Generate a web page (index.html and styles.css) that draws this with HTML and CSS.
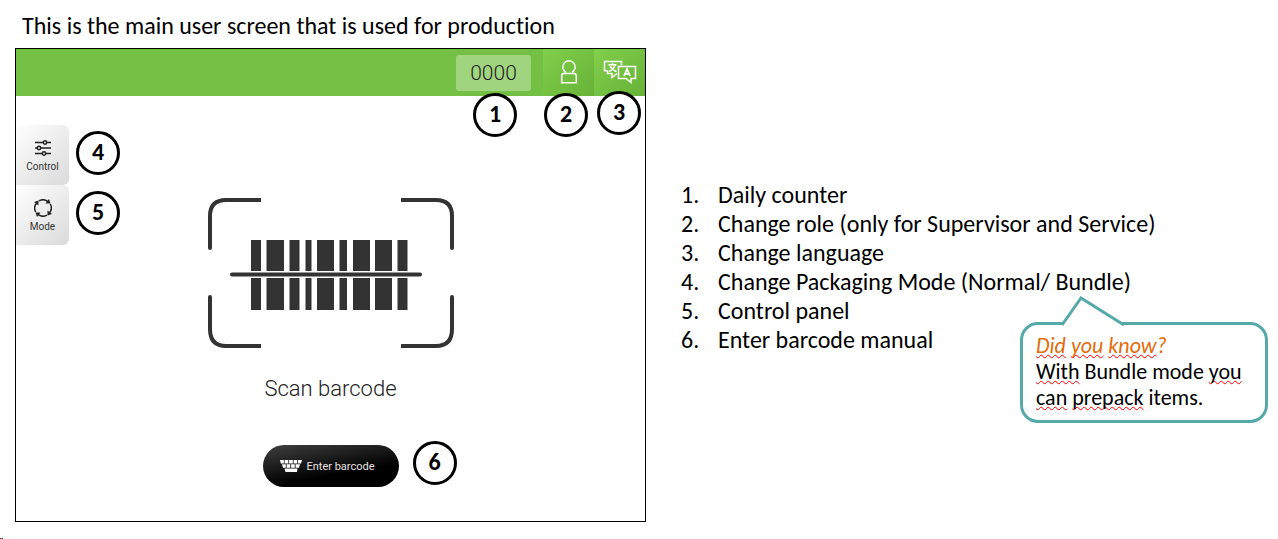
FILE: index.html
```html
<!DOCTYPE html>
<html lang="en">
<head>
<meta charset="utf-8">
<meta name="viewport" content="width=device-width, initial-scale=1">
<title>Main user screen</title>
<link rel="stylesheet" href="styles.css">
</head>
<body>
<main class="slide">
  <section class="demo">
    <h1 class="title">This is the main user screen that is used for production</h1>
    <div class="screen">
      <header class="topbar">
        <div class="anchor counter-wrap">
          <output class="counter">0000</output>
          <span class="mark mark-counter">1</span>
        </div>
        <div class="anchor">
          <button class="top-button" type="button" aria-label="Change role">
            <svg width="18" height="26" viewBox="0 0 18 26" fill="none" stroke="#fff" stroke-width="1.5">
              <path d="M6 13.5A6.2 6.2 0 1 1 12 13.5"/>
              <path d="M4 14.5H14Q16.3 14.5 16.3 17V23.8H1.7V17Q1.7 14.5 4 14.5Z"/>
            </svg>
          </button>
          <span class="mark mark-role">2</span>
        </div>
        <div class="anchor">
          <button class="top-button" type="button" aria-label="Change language">
            <svg width="34" height="26" viewBox="0 0 34 26" fill="none" stroke="#fff" stroke-width="1.5">
              <path d="M14 14.5L9 18.500V14.5H4.500V12L1.500 11.500V2.500H18.500V6.500"/>
              <path d="M5.500 5.800H13.500M9.500 4V6M12 6Q10.500 10.500 6 12.500M7 7Q9 11 13.500 12.500"/>
              <path d="M15.500 7.500H32.500V19.500H28V23.500L23 19.500H15.500Z"/>
              <path d="M21 17L24 10L27 17M22 14.800H26" stroke-width="1.800"/>
            </svg>
          </button>
          <span class="mark mark-language">3</span>
        </div>
      </header>
      <div class="workspace">
        <nav class="tabs">
          <div class="anchor">
            <button class="tab" type="button">
              <svg width="18" height="18" viewBox="0 0 18 18" fill="none" stroke="#222" stroke-width="1.5">
                <path d="M1 3.500H9M13 3.500H17M1 9H3M7 9H17M1 14.500H8M12 14.500H17"/>
                <circle cx="11" cy="3.500" r="1.700"/><circle cx="5" cy="9" r="1.700"/><circle cx="10" cy="14.500" r="1.700"/>
              </svg>
              <span>Control</span>
            </button>
            <span class="mark mark-tab">4</span>
          </div>
          <div class="anchor">
            <button class="tab" type="button">
              <svg width="18" height="18" viewBox="0 0 18 18" fill="none" stroke="#222" stroke-width="1.5">
                <path d="M5 1.900A8 8 0 0 1 14 2.600M16.300 5A8 8 0 0 1 15.800 13.500M13 16.100A8 8 0 0 1 4 15.400M1.700 13A8 8 0 0 1 2.200 4.500"/>
                <path d="M11.500 4.500H16.500L15 0ZM13.500 11.500V16.500L18 15ZM6.500 13.500H1.500L3 18ZM4.500 6.500V1.500L0 3Z" fill="#222" stroke="none"/>
              </svg>
              <span>Mode</span>
            </button>
            <span class="mark mark-tab">5</span>
          </div>
        </nav>
        <div class="scan">
          <svg class="barcode" width="246" height="150" viewBox="0 0 246 150" fill="none" stroke="#333" stroke-width="4">
            <path d="M53 2H18Q2 2 2 18V50M193 2H228Q244 2 244 18V50M2 99V131Q2 148 18 148H53M244 99V131Q244 148 228 148H193"/>
            <path d="M2 50v.1M244 50v.1M2 99v.1M244 99v.1" stroke-linecap="round"/>
            <g fill="#333" stroke="none">
              <path d="M43 42h10v70h-10zM58.500 42h17.500v70h-17.500zM81.500 42h10v70h-10zM97.500 42h6v70h-6zM109 42h17v70h-17zM131.500 42h7.500v70h-7.500zM145 42h17v70h-17zM167 42h17v70h-17zM189.500 42h10v70h-10z"/>
              <path d="M40 73h162v7h-162z" fill="#fff"/>
            </g>
            <path d="M24 76.500H212" stroke-linecap="round"/>
          </svg>
          <p class="scan-label">Scan barcode</p>
          <div class="anchor">
            <button class="enter" type="button">
              <svg width="22" height="12" viewBox="0 0 22 12" fill="#fff">
                <path d="M0 0h3.800v3.500h-3zM4.600 0h3.700v3.500H4.600zM9.100 0h3.700v3.500H9.100zM13.600 0h3.700v3.500h-3.700zM18.100 0H22l-1 3.500h-2.900zM2 4.300h3.800v3.500H3zM6.600 4.300h3.700v3.500H6.600zM11.100 4.300h3.700v3.500h-3.700zM15.600 4.300H20l-1 3.500h-3.400zM4.500 8.600h13L17 12H5.500z"/>
              </svg>
              <span>Enter barcode</span>
            </button>
            <span class="mark mark-enter">6</span>
          </div>
        </div>
      </div>
    </div>
  </section>
  <section class="notes">
    <ol class="legend">
      <li>Daily counter</li>
      <li>Change role (only for Supervisor and Service)</li>
      <li>Change language</li>
      <li>Change Packaging Mode (Normal/ Bundle)</li>
      <li>Control panel</li>
      <li>Enter barcode manual</li>
    </ol>
    <aside class="callout">
      <svg class="tail" width="66" height="30" viewBox="0 0 66 30">
        <path d="M2 29L21 2L64 29" fill="#fff" stroke="#56a9a9" stroke-width="3"/>
      </svg>
      <p class="callout-title"><span class="typo">Did</span> <span class="typo">you</span> <span class="typo">know</span>?</p>
      <p><span class="typo">With</span> Bundle mode <span class="typo">you</span><br><span class="typo">can</span> <span class="typo">prepack</span> items.</p>
    </aside>
  </section>
</main>
</body>
</html>
```
FILE: styles.css
```css
* { box-sizing: border-box; }

body {
  margin: 0;
  min-height: 100vh;
  background: linear-gradient(90deg, #f00 1px, #0c6 1px 2px, #00f 2px) left bottom / 3px 1px no-repeat #fff;
  color: #000;
  font-family: Carlito, Calibri, Lato, sans-serif;
  font-variant-ligatures: none;
}

p, h1 { margin: 0; }
button { border: 0; margin: 0; padding: 0; cursor: pointer; }
svg { display: block; flex: none; }

.slide {
  display: grid;
  grid-template-columns: minmax(0, 1fr) minmax(0, 1fr);
  padding: 12px 1px 17px 15px;
}

.title {
  padding-left: 7px;
  font-size: 24px;
  line-height: 28px;
  font-weight: 400;
  white-space: nowrap;
}

.screen {
  margin-top: 8px;
  border: 1px solid #000;
  font-family: Roboto, sans-serif;
}

.anchor { position: relative; }

.topbar {
  display: flex;
  justify-content: flex-end;
  height: 47px;
  background: #74c044;
}

.counter-wrap {
  display: flex;
  align-items: center;
  margin-right: 12px;
}

.counter {
  width: 75px;
  border-radius: 3px;
  background: #a0d47f;
  color: #222;
  font-size: 21px;
  line-height: 36px;
  font-weight: 300;
  text-align: center;
}

.top-button {
  display: grid;
  place-items: center;
  width: 51px;
  height: 47px;
  padding-bottom: 2px;
  background: linear-gradient(135deg, #82cf4c, #66b238);
}

.mark {
  position: absolute;
  z-index: 1;
  display: grid;
  place-items: center;
  width: 44px;
  height: 44px;
  padding-bottom: 2px;
  border: 3px solid #000;
  border-radius: 50%;
  background: #fff;
  font-family: Carlito, Calibri, Lato, sans-serif;
  font-size: 24px;
  line-height: 24px;
  font-weight: 700;
}

.mark-counter { top: 44px; left: 17px; }
.mark-role { top: 44px; left: 1px; }
.mark-language { top: 42px; left: 3px; }
.mark-tab { top: 6px; left: 60px; }
.mark-enter { top: -4px; left: 150px; }

.workspace {
  display: grid;
  padding: 29px 0 34px;
}

.tabs, .scan { grid-area: 1 / 1; }

.tabs {
  display: flex;
  flex-direction: column;
  justify-self: start;
}

.tab {
  display: flex;
  flex-direction: column;
  align-items: center;
  gap: 4px;
  width: 53px;
  height: 60px;
  padding-top: 14px;
  border-radius: 0 6px 6px 0;
  background: linear-gradient(135deg, #fff, #dadada);
  color: #333;
  font-family: Roboto, sans-serif;
  font-size: 10px;
  line-height: 12px;
}

.scan {
  display: flex;
  flex-direction: column;
  align-items: center;
  padding-top: 73px;
}

.scan-label {
  margin: 27px 0 42px;
  color: #222;
  font-size: 22px;
  line-height: 28px;
  font-weight: 300;
}

.enter {
  display: flex;
  align-items: center;
  justify-content: center;
  gap: 4px;
  width: 136px;
  height: 42px;
  padding-right: 6px;
  border-radius: 21px;
  background: linear-gradient(170deg, #404040, #000 65%);
  color: #e8e0e0;
  font-family: Roboto, sans-serif;
  font-size: 11px;
}

.notes {
  position: relative;
  padding: 168px 0 0 35px;
}

.legend {
  margin: 0;
  padding: 0;
  list-style: none;
  counter-reset: item;
  font-size: 24px;
  line-height: 29px;
}

.legend li {
  display: flex;
  counter-increment: item;
  white-space: nowrap;
}

.legend li::before {
  content: counter(item) ".";
  width: 37px;
}

.callout {
  position: absolute;
  top: 310px;
  right: 9px;
  width: 248px;
  padding: 8px 12px 9px 13px;
  border: 3px solid #56a9a9;
  border-radius: 18px;
  background: #fff;
  font-size: 22px;
  line-height: 26px;
  white-space: nowrap;
}

.tail {
  position: absolute;
  top: -29px;
  left: 37px;
}

.callout-title {
  color: #e36c0a;
  font-family: "Segoe Script", "Bradley Hand ITC", Carlito, cursive;
  font-style: italic;
}

.typo {
  text-decoration: underline wavy #f00 1px;
  text-decoration-skip-ink: none;
  text-underline-offset: 1px;
}
```
